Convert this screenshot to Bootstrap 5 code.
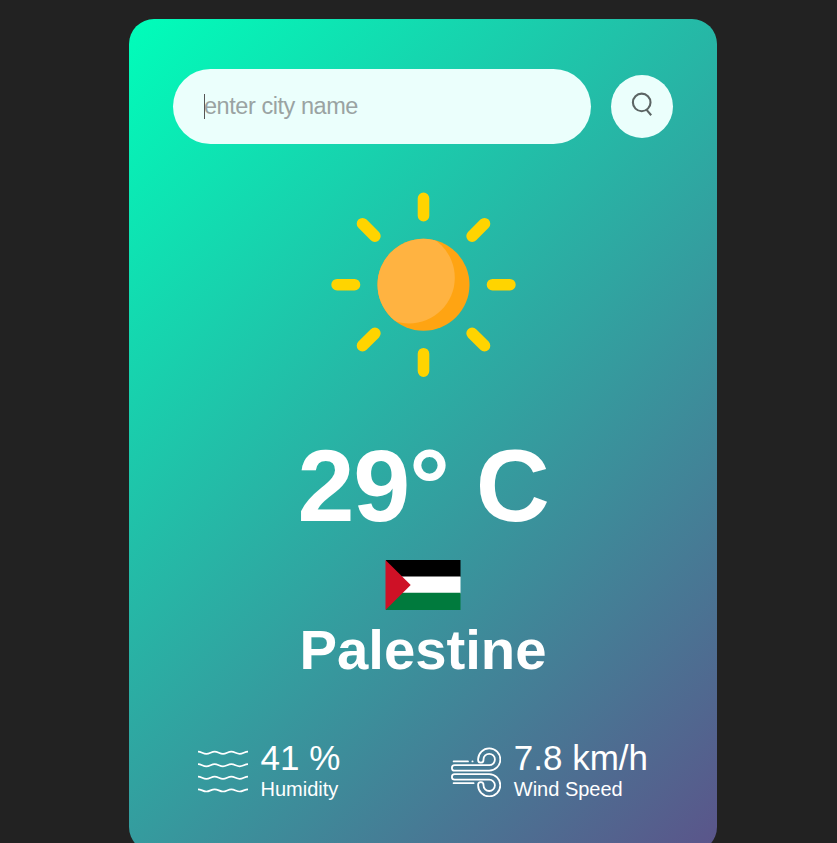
<!DOCTYPE html>
<html lang="en">
<head>
<meta charset="utf-8">
<meta name="viewport" content="width=device-width, initial-scale=1">
<title>Weather</title>
<link href="https://cdn.jsdelivr.net/npm/bootstrap@5.3.0/dist/css/bootstrap.min.css" rel="stylesheet">
<style>
  html, body { background: #222; overflow: hidden; }
  body { height: 100vh; font-family: "Liberation Sans", Arial, sans-serif; }
  .weather-panel {
    width: 588px; height: 833px; margin: 19px 0 0 129px; padding: 50px 44px;
    border-radius: 25px; background: linear-gradient(135deg, #00feba, #5b548a);
  }
  .search-row { gap: 20px; }
  .city-input, .city-input:focus {
    height: 75px; padding: 0 31px; font-size: 23.5px; letter-spacing: -.45px; color: #555;
    background: #ebfffc; border: 0; border-radius: 38px; box-shadow: none;
  }
  .city-input::placeholder { color: #9aa3a2; opacity: 1; }
  .caret-line { left: 31px; top: 25px; width: 1px; height: 25px; background: #555; }
  .search-btn { width: 62px; height: 63px; background: #ebfffc; }
  .sun-icon { width: 212px; height: 212px; margin-top: 35px; }
  .temp-text { font-size: 102.5px; letter-spacing: -1.3px; line-height: 114px; font-weight: 700; margin-top: 38px; }
  .flag-icon { width: 76px; height: 50px; margin-top: 17px; }
  .city-text { font-size: 56.25px; line-height: 64px; font-weight: 700; margin-top: 8px; }
  .details-row { margin-top: 56px; padding: 0 25px; }
  .stat-icon { width: 50px; height: 50px; margin: 4px 12.5px 0 0; }
  .stat-value { font-size: 35px; line-height: 40px; }
  .stat-label { font-size: 20px; line-height: 23px; }
</style>
</head>
<body>
<main class="weather-panel text-white text-center">
  <form class="search-row d-flex align-items-center">
    <div class="position-relative flex-grow-1">
      <input class="city-input form-control" type="text" placeholder="enter city name" spellcheck="false" aria-label="City">
      <span class="caret-line position-absolute"></span>
    </div>
    <button class="search-btn btn rounded-circle p-0 flex-shrink-0 border-0" type="button" aria-label="Search">
      <svg class="d-block" width="62" height="63" viewBox="0 0 62 63" fill="none" stroke="#5c6564" stroke-width="2.1">
        <circle cx="30.7" cy="27.4" r="8.8"/><path d="M35.2 34.4L40.2 40.2"/>
      </svg>
    </button>
  </form>

  <section class="d-flex flex-column align-items-center">
    <svg class="sun-icon" viewBox="-106.5 -105.7 212 212">
      <defs><clipPath id="disc"><circle r="46"/></clipPath></defs>
      <g stroke="#ffd400" stroke-width="11.6" stroke-linecap="round">
        <path d="M0-86.4V-69M0 69V86.4M-86.4 0H-69M69 0H86.4M-61-61l12.4 12.4M61-61L48.6-48.6M-61 61l12.4-12.4M61 61L48.6 48.6"/>
      </g>
      <circle r="46" fill="#ffa412"/>
      <circle cx="-14.5" cy="-7" r="45.8" fill="#ffb341" clip-path="url(#disc)"/>
    </svg>
    <div class="temp-text">29° C</div>
    <svg class="flag-icon" viewBox="0 0 76 50" preserveAspectRatio="none">
      <path fill="#000" d="M1 0h74.5v17H1z"/><path fill="#fff" d="M2 16.4h73.5v17H2z"/>
      <path fill="#007a3d" d="M1 32.7h74.5V50H1z"/><path fill="#ce1126" d="M.5 0l25.2 25L.5 50z"/>
    </svg>
    <div class="city-text">Palestine</div>
  </section>

  <section class="details-row d-flex justify-content-between">
    <div class="d-flex align-items-center text-start">
      <svg class="stat-icon" viewBox="0 0 50 50" fill="none" stroke="#fff" stroke-width="1.7">
        <defs><path id="wave" d="M0-1.1C3.3-1.1 5 1.1 8.33 1.1S13.4-1.1 16.67-1.1S21.7 1.1 25 1.1S30-1.1 33.33-1.1S38.4 1.1 41.67 1.1S46.7-1.1 50-1.1"/></defs>
        <use href="#wave" y="5.8"/><use href="#wave" y="18.3"/><use href="#wave" y="30.8"/><use href="#wave" y="43.4"/>
      </svg>
      <div>
        <div class="stat-value">41 %</div>
        <div class="stat-label">Humidity</div>
      </div>
    </div>
    <div class="d-flex align-items-center text-start">
      <svg class="stat-icon" viewBox="0 0 50 50" fill="none" stroke="#fff" stroke-width="1.8" stroke-linecap="round">
        <path d="M3.6 18.2H38.2A5.7 5.7 0 1 0 32.5 12.5V13A2.7 2.7 0 0 1 27.1 13V12.3A11.1 11.1 0 1 1 38.2 23.6H3.6A2.7 2.7 0 0 1 3.6 18.2Z"/>
        <path d="M3.6 32.6H38.2A5.7 5.7 0 1 1 32.5 38.3V37.8A2.7 2.7 0 0 0 27.1 37.8V38.3A11.1 11.1 0 1 0 38.2 27.2H3.6A2.7 2.7 0 0 0 3.6 32.6Z"/>
        <path d="M2.6 14.4H17M21.4 14.4h.2M2.6 36.2H22.6"/>
      </svg>
      <div>
        <div class="stat-value">7.8 km/h</div>
        <div class="stat-label">Wind Speed</div>
      </div>
    </div>
  </section>
</main>
<script src="https://cdn.jsdelivr.net/npm/bootstrap@5.3.0/dist/js/bootstrap.bundle.min.js"></script>
</body>
</html>
